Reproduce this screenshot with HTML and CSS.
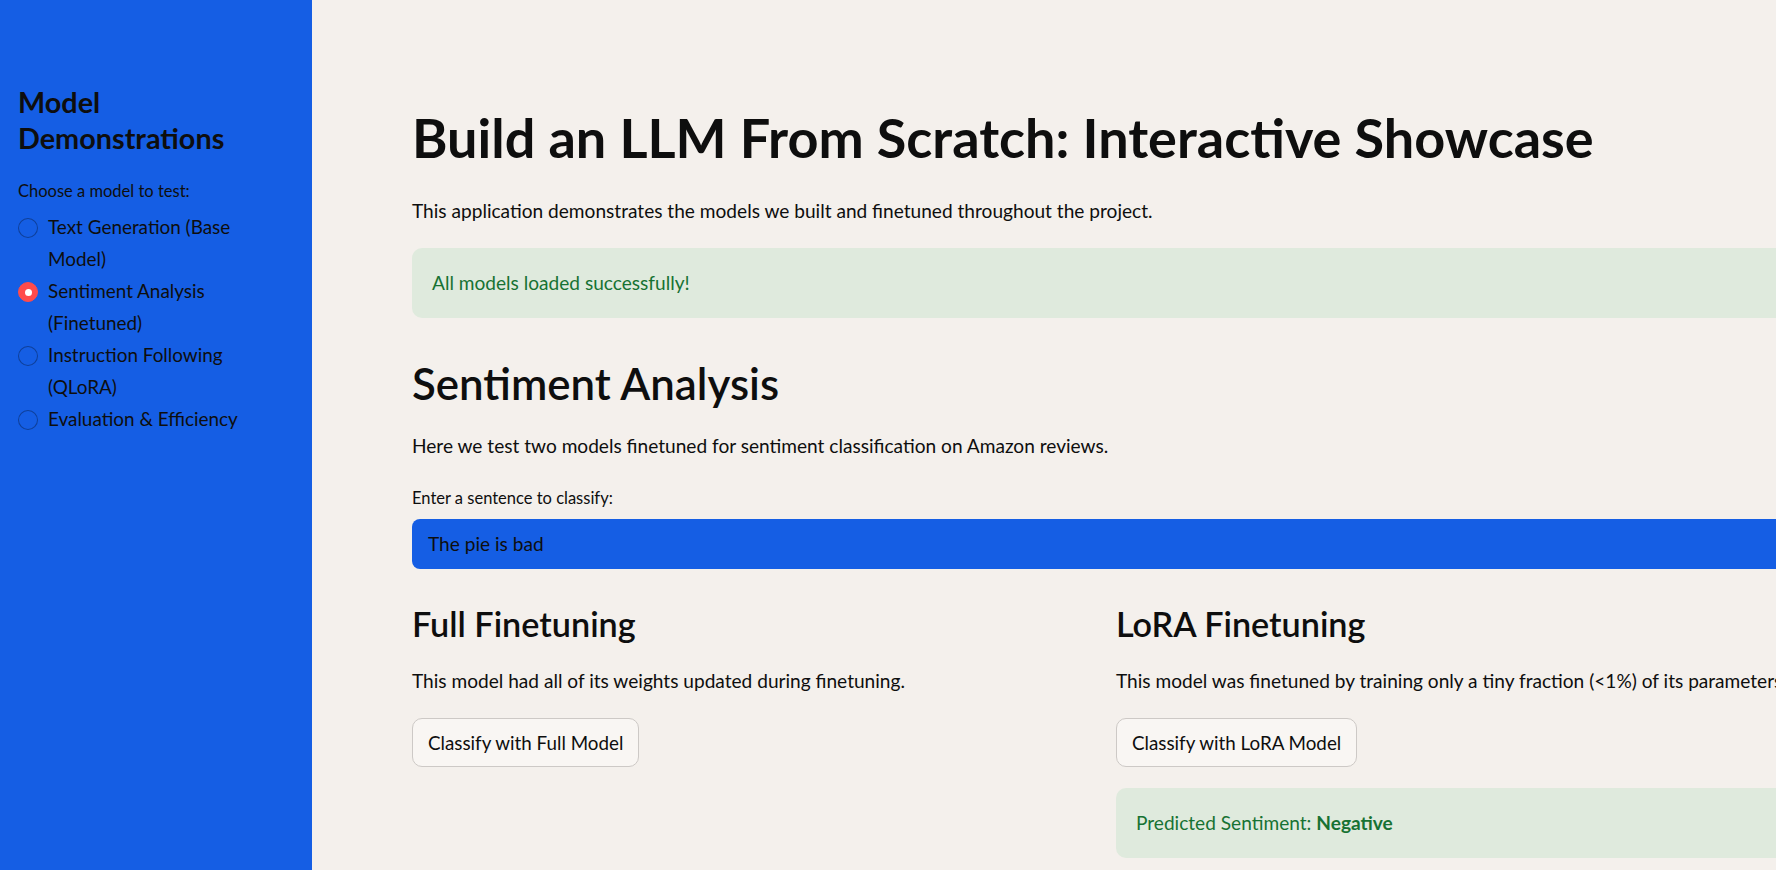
FILE: index.html
```html
<!DOCTYPE html>
<html lang="en">
<head>
<meta charset="utf-8">
<title>Build an LLM From Scratch: Interactive Showcase</title>
<link rel="stylesheet" href="styles.css">
</head>
<body>
<div class="app">
  <aside class="sidebar">
    <h2 class="side-title">Model Demonstrations</h2>
    <div class="side-label">Choose a model to test:</div>
    <ul class="radio-list">
      <li class="radio"><span class="dot"></span><span class="radio-text">Text Generation (Base Model)</span></li>
      <li class="radio selected"><span class="dot"></span><span class="radio-text">Sentiment Analysis (Finetuned)</span></li>
      <li class="radio"><span class="dot"></span><span class="radio-text">Instruction Following (QLoRA)</span></li>
      <li class="radio"><span class="dot"></span><span class="radio-text">Evaluation &amp; Efficiency</span></li>
    </ul>
  </aside>
  <main class="main">
    <div class="content">
      <h1 class="title">Build an LLM From Scratch: Interactive Showcase</h1>
      <p class="text intro">This application demonstrates the models we built and finetuned throughout the project.</p>
      <div class="alert alert-top">All models loaded successfully!</div>
      <h2 class="section">Sentiment Analysis</h2>
      <p class="text sec-intro">Here we test two models finetuned for sentiment classification on Amazon reviews.</p>
      <label class="field-label">Enter a sentence to classify:</label>
      <div class="input">The pie is bad</div>
      <div class="columns">
        <div class="col">
          <h3 class="sub">Full Finetuning</h3>
          <p class="text col-text">This model had all of its weights updated during finetuning.</p>
          <button class="btn">Classify with Full Model</button>
        </div>
        <div class="col">
          <h3 class="sub">LoRA Finetuning</h3>
          <p class="text col-text">This model was finetuned by training only a tiny fraction (&lt;1%) of its parameters.</p>
          <button class="btn">Classify with LoRA Model</button>
          <div class="alert alert-result">Predicted Sentiment: <strong>Negative</strong></div>
        </div>
      </div>
    </div>
  </main>
</div>
</body>
</html>
```

FILE: styles.css
```css
html, body {
  margin: 0;
  padding: 0;
  overflow: hidden;
  height: 100%;
}

body {
  font-family: "Lato", "Liberation Sans", sans-serif;
  color: #0e0e0e;
  background: #f4f0ec;
}

.app {
  display: flex;
  height: 870px;
  width: 1800px;
}

/* Sidebar */
.sidebar {
  flex: 0 0 312px;
  box-sizing: border-box;
  background: #155ee4;
  padding: 84px 18px 0 18px;
}

.side-title {
  margin: 0;
  font-size: 28.8px;
  line-height: 36px;
  font-weight: 700;
  color: #0e0e0e;
}

.side-label {
  margin-top: 23px;
  font-size: 16.5px;
  line-height: 24px;
}

.radio-list {
  list-style: none;
  margin: 8px 0 0 0;
  padding: 0;
}

.radio {
  display: flex;
  align-items: flex-start;
  gap: 10px;
  font-size: 18.9px;
  line-height: 32px;
}

.radio-text {
  width: 220px;
}

.dot {
  flex: 0 0 auto;
  box-sizing: border-box;
  width: 20px;
  height: 20px;
  margin-top: 7px;
  border-radius: 50%;
  border: 1px solid rgba(0, 0, 0, 0.32);
  background: #155ee4;
  display: flex;
  align-items: center;
  justify-content: center;
}

.radio.selected .dot {
  background: #ff4b4b;
  border-color: #ff4b4b;
}

.radio.selected .dot::after {
  content: "";
  width: 7px;
  height: 7px;
  border-radius: 50%;
  background: #ffffff;
}

/* Main */
.main {
  flex: 0 0 auto;
  padding: 107px 0 0 100px;
}

.content {
  width: 1388px;
  display: flex;
  flex-direction: column;
}

.title {
  margin: 0;
  font-size: 54px;
  line-height: 62px;
  font-weight: 700;
}

.text {
  margin: 0;
  font-size: 19.1px;
  line-height: 32px;
}

.intro {
  margin-top: 26px;
}

.alert {
  box-sizing: border-box;
  height: 70px;
  padding: 19px 20px;
  border-radius: 10px;
  background: #dfeadd;
  color: #177233;
  font-size: 19.1px;
  line-height: 32px;
}

.alert strong {
  font-weight: 700;
}

.alert-top {
  margin-top: 21px;
}

.section {
  margin: 40px 0 0 0;
  font-size: 43.8px;
  line-height: 51px;
  font-weight: 600;
}

.sec-intro {
  margin-top: 21px;
}

.field-label {
  margin-top: 24px;
  font-size: 16.5px;
  line-height: 24px;
}

.input {
  box-sizing: border-box;
  margin-top: 9px;
  height: 50px;
  padding: 9px 16px;
  border-radius: 8px;
  background: #155ee4;
  font-size: 19.1px;
  line-height: 32px;
}

.columns {
  display: grid;
  grid-template-columns: 684px 684px;
  column-gap: 20px;
  margin-top: 35px;
}

.col {
  display: flex;
  flex-direction: column;
  align-items: flex-start;
}

.sub {
  margin: 0;
  font-size: 34.2px;
  line-height: 40px;
  font-weight: 600;
}

.col-text {
  margin-top: 21px;
  white-space: nowrap;
}

.btn {
  box-sizing: border-box;
  margin-top: 21px;
  height: 49px;
  padding: 0 15px;
  border: 1px solid #cdc9c6;
  border-radius: 10px;
  background: #f9f6f3;
  color: #0e0e0e;
  font-family: "Lato", "Liberation Sans", sans-serif;
  font-size: 18.8px;
  line-height: 32px;
}

.alert-result {
  margin-top: 21px;
  width: 100%;
}
```
